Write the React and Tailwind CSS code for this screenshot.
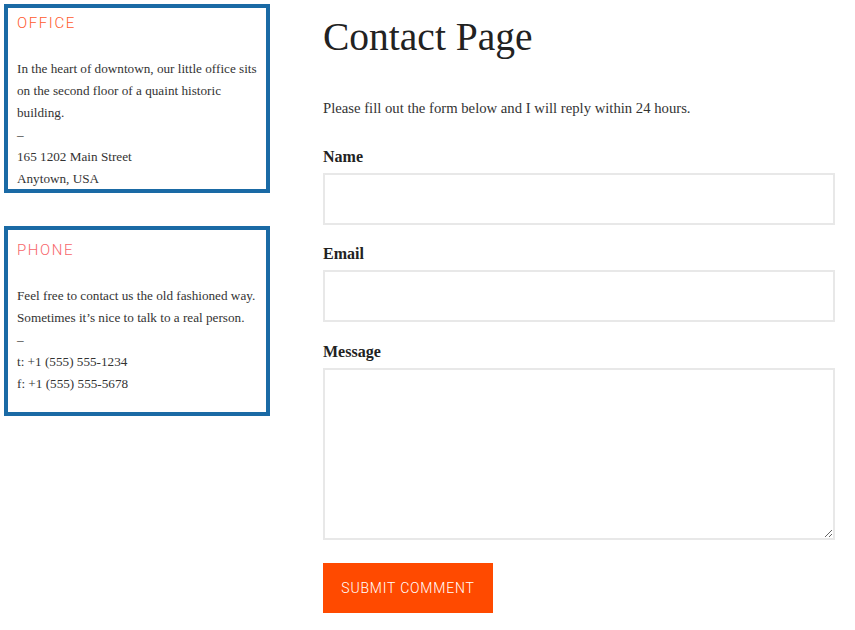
const serif = { fontFamily: '"Liberation Serif", "DejaVu Serif", serif' };

const InfoCard = ({ title, titleColor, className, children }) => {
    return (
        <div className={`border-4 border-[#1a6aa5] pl-[9px] pr-[6px] ${className}`}>
            <h3 className={`font-['Roboto',sans-serif] font-light text-[15px] leading-[16px] tracking-[1.6px] ${titleColor}`}>{title}</h3>
            <div className="mt-[27px] text-[13.2px] leading-[22px] text-[#333]" style={serif}>
                {children}
            </div>
        </div>
    )
}

const Field = ({ label, className = "", children }) => {
    return (
        <div className={className}>
            <label className="block text-[16px] font-bold leading-[22px] text-[#222] mb-[5px]" style={serif}>{label}</label>
            {children}
        </div>
    )
}

const App = () => {

    return (
        <div className="w-[855px] h-[630px] bg-white flex overflow-hidden">

            <div className="w-[266px] ml-[4px] mt-[4px] flex flex-col">
                <InfoCard title="OFFICE" titleColor="text-[#ff5a2e]" className="h-[189px] pt-[7px]">
                    <p>In the heart of downtown, our little office sits on the second floor of a quaint historic building.</p>
                    <p>–</p>
                    <p>165 1202 Main Street</p>
                    <p>Anytown, USA</p>
                </InfoCard>

                <InfoCard title="PHONE" titleColor="text-[#f7656a]" className="h-[190px] mt-[33px] pt-[12px]">
                    <p>Feel free to contact us the old fashioned way. Sometimes it’s nice to talk to a real person.</p>
                    <p>–</p>
                    <p>t: +1 (555) 555-1234</p>
                    <p>f: +1 (555) 555-5678</p>
                </InfoCard>
            </div>

            <div className="w-[512px] ml-[53px]">
                <h1 className="mt-[13px] text-[39.5px] leading-[48px] text-[#222]" style={serif}>Contact Page</h1>

                <p className="mt-[35px] text-[14.7px] leading-[24px] text-[#333]" style={serif}>Please fill out the form below and I will reply within 24 hours.</p>

                <form className="mt-[26px]" onSubmit={e => e.preventDefault()}>
                    <Field label="Name">
                        <input type="text" className="block w-full h-[52px] border-2 border-[#e8e8e8] outline-none px-3" />
                    </Field>
                    <Field label="Email" className="mt-[18px]">
                        <input type="email" className="block w-full h-[52px] border-2 border-[#e8e8e8] outline-none px-3" />
                    </Field>
                    <Field label="Message" className="mt-[19px]">
                        <textarea className="block w-full h-[172px] border-2 border-[#e8e8e8] outline-none p-3"></textarea>
                    </Field>

                    <button type="submit" className="mt-[23px] w-[170px] h-[50px] bg-[#ff4a00] text-white font-['Roboto',sans-serif] font-light text-[14px] tracking-[0.8px]">SUBMIT COMMENT</button>
                </form>
            </div>

        </div>
    )
}

export default App;
